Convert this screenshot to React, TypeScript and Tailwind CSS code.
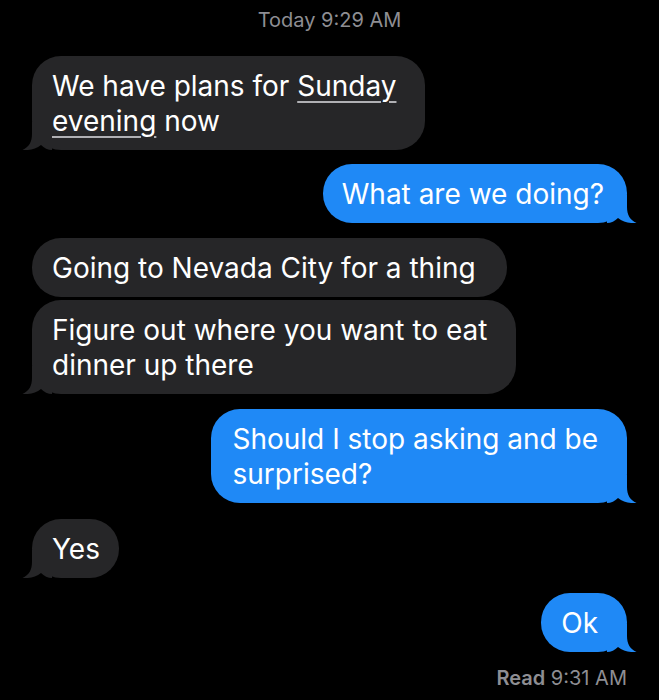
import React from "react";

const BLUE = "#1f89f6";
const GRAY = "#262628";

function Tail({ side, color }: { side: "left" | "right"; color: string }) {
  return (
    <svg
      width="30"
      height="28"
      viewBox="0 0 30 28"
      className={
        side === "right"
          ? "absolute bottom-0 right-[-10px]"
          : "absolute bottom-0 left-[-10px] -scale-x-100"
      }
    >
      <path
        d="M0 0 H20 V12 C20 20 23 25 29.5 28 C23 28.6 16 27 11 23 C8 26 4 28 0 28 Z"
        fill={color}
      />
    </svg>
  );
}

function Bubble({
  side,
  tail,
  children,
  className = "",
  bubbleClass = "pl-[20px] pr-[28px]",
}: {
  side: "left" | "right";
  tail?: boolean;
  children: React.ReactNode;
  className?: string;
  bubbleClass?: string;
}) {
  const color = side === "right" ? BLUE : GRAY;
  return (
    <div className={`flex ${side === "right" ? "justify-end" : "justify-start"} ${className}`}>
      <div
        className={`relative rounded-[29px] pt-[12.5px] pb-[11.5px] text-[28px] leading-[35px] text-white whitespace-nowrap ${bubbleClass} ${
          side === "right" ? "bg-[#1f89f6]" : "bg-[#262628]"
        }`}
      >
        {tail && <Tail side={side} color={color} />}
        <span className="relative">{children}</span>
      </div>
    </div>
  );
}

export default function App() {
  return (
    <div
      className="w-[659px] h-[700px] bg-black overflow-hidden flex flex-col px-[32px]"
      style={{ fontFamily: "Inter, 'Noto Sans', sans-serif" }}
    >
      <div className="mt-[8px] text-center text-[20px] leading-[24px] text-[#8e8e93]">
        Today 9:29 AM
      </div>

      <Bubble side="left" tail className="mt-[24px]" bubbleClass="pl-[20px] pr-[29px]">
        We have plans for{" "}
        <span className="underline decoration-[#b0b0b4] decoration-[1.5px] underline-offset-[5px]">
          Sunday
        </span>
        <br />
        <span className="underline decoration-[#b0b0b4] decoration-[1.5px] underline-offset-[5px]">
          evening
        </span>{" "}
        now
      </Bubble>

      <Bubble side="right" tail className="mt-[14px]" bubbleClass="pl-[19px] pr-[23px]">
        What are we doing?
      </Bubble>

      <Bubble side="left" className="mt-[15px]" bubbleClass="pl-[20px] pr-[31px]">
        Going to Nevada City for a thing
      </Bubble>

      <Bubble side="left" tail className="mt-[3px]" bubbleClass="pl-[20px] pr-[29px]">
        Figure out where you want to eat
        <br />
        dinner up there
      </Bubble>

      <Bubble side="right" tail className="mt-[15px]" bubbleClass="pl-[21px] pr-[29px]">
        Should I stop asking and be
        <br />
        surprised?
      </Bubble>

      <Bubble side="left" tail className="mt-[16px]" bubbleClass="w-[87px] pl-[20px]">
        Yes
      </Bubble>

      <Bubble side="right" tail className="mt-[15px]" bubbleClass="pl-[20px] pr-[29px]">
        Ok
      </Bubble>

      <div className="mt-[14px] text-right text-[20px] leading-[24px] text-[#8e8e93]">
        <span className="font-semibold">Read</span> 9:31 AM
      </div>
    </div>
  );
}
